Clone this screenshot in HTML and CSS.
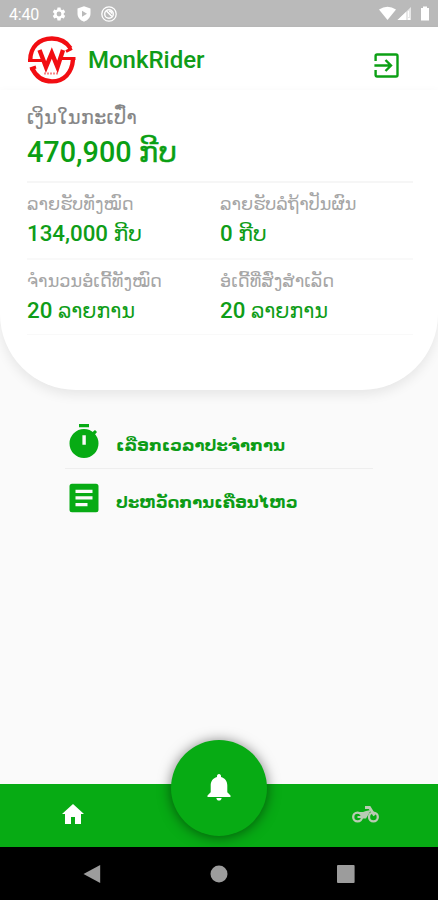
FILE: index.html
```html
<!DOCTYPE html>
<html lang="lo">
<head>
<meta charset="utf-8">
<title>MonkRider</title>
<link rel="stylesheet" href="styles.css">
</head>
<body>
<div class="screen">
  <div class="status">
    <span class="clock">4:40</span>
    <svg class="s-gear" width="16" height="16" viewBox="0 0 24 24"><path d="M19.14 12.94c.04-.3.06-.61.06-.94s-.02-.64-.07-.94l2.03-1.58a.49.49 0 0 0 .12-.61l-1.92-3.32a.49.49 0 0 0-.59-.22l-2.39.96a7 7 0 0 0-1.62-.94l-.36-2.54a.48.48 0 0 0-.48-.41h-3.84a.47.47 0 0 0-.47.41l-.36 2.54c-.59.24-1.13.57-1.62.94l-2.39-.96a.48.48 0 0 0-.59.22L2.74 8.87a.48.48 0 0 0 .12.61l2.03 1.58a6 6 0 0 0 0 1.88l-2.03 1.58a.49.49 0 0 0-.12.61l1.92 3.32c.12.22.37.29.59.22l2.39-.96c.5.38 1.03.7 1.62.94l.36 2.54c.05.24.24.41.48.41h3.84c.24 0 .44-.17.47-.41l.36-2.54a7 7 0 0 0 1.62-.94l2.39.96c.22.08.47 0 .59-.22l1.92-3.32a.47.47 0 0 0-.12-.61zM12 15.6a3.6 3.6 0 1 1 0-7.2 3.6 3.6 0 0 1 0 7.2z"/></svg>
    <svg class="s-shield" width="14" height="16" viewBox="0 0 14 16"><path fill-rule="evenodd" d="M7 .3 13.5 2.600v5c0 4-2.700 6.900-6.500 8.100C3.200 14.500.5 11.600.5 7.600v-5zM5 4.700v6L10 7.700z"/></svg>
    <svg class="s-ring" width="16" height="16" viewBox="0 0 16 16" fill="none" stroke="#fff"><circle cx="8" cy="8" r="7.200" stroke-width="1.300"/><circle cx="8" cy="8" r="4.300" stroke-width="1.400"/><path d="m5.500 5 5.500 5.500M8 5.200c2 0 2.800 1 2.800 2.500" stroke-width="1.500"/></svg>
    <span class="grow"></span>
    <svg width="51" height="16" viewBox="0 0 51 16"><path d="M0 3.500Q8.500-2 17 3.500L8.500 14z"/><path d="M32 1v13H18.500z" opacity=".65"/><path d="M27 6v8h-8.500zM29 5h1v6h-1zM29 12h2v2h-2z"/><path d="M42 2h2V.5h4V2h2v12.500h-8z"/></svg>
  </div>
  <header class="bar">
    <svg class="logo" width="48" height="48" viewBox="0 0 48 48" fill="none" stroke="#f20d12"><path d="M2.300 24.500C2 11 11 2.500 24 2.500c8 0 14.500 3.700 18.500 9.700" stroke-width="4.400"/><path d="M4 32C8 41 15 45.400 24 45.400c12 0 20-8.500 21-22" stroke-width="4.400"/><path d="M0 24.500h14M32 22.500h15.500M2 33l6-2M38 15.500l6-3" stroke-width="3"/><path d="m11.500 14 6.500 17 5.800-14L29.500 31 35 14" stroke-width="4.400"/><path d="M16 37.500h15" stroke-width="1.800" stroke-dasharray="2 1" opacity=".5"/></svg>
    <h1>MonkRider</h1>
    <svg class="exit" width="25" height="25" viewBox="0 0 25 25" fill="none" stroke="#0ca015" stroke-width="2.400"><path d="M1.600 8V3q0-1.500 1.500-1.500H22q1.500 0 1.500 1.500v19q0 1.500-1.500 1.500H3.100Q1.600 23.500 1.600 22v-5M.4 12.500H17M11.500 7l5.500 5.500-5.500 5.500"/></svg>
  </header>
  <section class="wallet">
    <div class="total">
      <div class="label strong">ເງິນໃນກະເປົ໋າ</div>
      <div class="amount">470,900 <span class="lao">ກີບ</span></div>
    </div>
    <div class="pair">
      <div><div class="label">ລາຍຮັບທັງໝົດ</div><div class="value">134,000 <span class="lao">ກີບ</span></div></div>
      <div><div class="label">ລາຍຮັບລໍຖ້າປັນຜົນ</div><div class="value">0 <span class="lao">ກີບ</span></div></div>
    </div>
    <div class="pair last">
      <div><div class="label">ຈຳນວນອໍເດີ້ທັງໝົດ</div><div class="value">20 <span class="lao items">ລາຍການ</span></div></div>
      <div><div class="label">ອໍເດີ້ທີ່ສົ່ງສຳເລັດ</div><div class="value">20 <span class="lao items">ລາຍການ</span></div></div>
    </div>
  </section>
  <nav class="menu">
    <a class="item">
      <svg width="30" height="35" viewBox="0 0 30 35"><path fill-rule="evenodd" d="M10 0h10v3.200H10zM15 5a14.500 14.500 0 1 1 0 29 14.500 14.500 0 0 1 0-29zm-1.600 6.200v9.600h3.400v-9.600z"/><path d="m23 8.500 3-2.500 2 2-2.500 3z"/></svg>
      <span>ເລືອກເວລາປະຈຳການ</span>
    </a>
    <a class="item second">
      <svg width="30" height="30" viewBox="0 0 30 30"><path fill-rule="evenodd" d="M3 .7h24q2.500 0 2.500 2.500v23.600q0 2.500-2.500 2.500H3Q.5 29.300.5 26.800V3.200Q.5.700 3 .7zM6.500 6.700V10h17V6.700zm0 6.600v3.300h17v-3.300zm0 6.700v3.300h12V20z"/></svg>
      <span>ປະຫວັດການເຄື່ອນໄຫວ</span>
    </a>
  </nav>
  <footer class="tabs">
    <div class="tab"><svg width="22" height="20" viewBox="0 0 22 20" fill="#fff"><path d="M11 0 22 10h-3v10h-6v-7H9v7H3V10H0z"/></svg></div>
    <div class="fab"><svg width="24" height="27" viewBox="0 0 24 27" fill="#fff"><path d="M12 0c1.300 0 2 1 2 2.200v.8c4 1 6.300 4.300 6.300 8.500v6.800L23.500 21.500V23H.5v-1.500l3.200-3.200v-6.800C3.700 7.300 6 4 10 3v-.8C10 1 10.700 0 12 0zM9.400 24h5.200c0 1.500-1 2.600-2.600 2.600S9.400 25.500 9.400 24z"/></svg></div>
    <div class="tab"><svg class="bike" width="27" height="17" viewBox="0 0 27 17" fill="none" stroke="#b9cbb4"><circle cx="5.600" cy="11" r="4.400" stroke-width="2.300"/><circle cx="21.400" cy="11" r="4.400" stroke-width="2.300"/><path d="M13 1.500h4.500l5 8" stroke-width="2.800"/><path d="M3 6h8l3-1 5-1-5 8.500h-4.500c0-3-2-5-6-6zM5.500 10H11v2H5.500z" fill="#b9cbb4" stroke="none"/></svg></div>
  </footer>
  <div class="system">
    <svg width="18" height="20" viewBox="0 0 18 20"><path d="M17.200 1v18L.5 10z"/></svg>
    <svg width="18" height="18" viewBox="0 0 18 18"><circle cx="9" cy="9" r="8.500"/></svg>
    <svg width="18" height="18" viewBox="0 0 18 18"><rect width="17.600" height="18" rx="1"/></svg>
  </div>
</div>
</body>
</html>
```
FILE: styles.css
```css
* { box-sizing: border-box; }
body { margin: 0; font-family: Roboto, "DejaVu Sans", sans-serif; }
.lao, .label, .item { font-family: "DejaVu Sans", sans-serif; }
.screen { width: 438px; height: 900px; display: flex; flex-direction: column; background: #fafafa; overflow: hidden; }
.status { height: 27px; flex: none; background: #bababa; display: flex; align-items: center; padding: 1px 8px 0 9px; fill: #fff; }
.clock { color: #fff; font-size: 16px; width: 42px; letter-spacing: -.2px; }
.s-shield { margin-left: 10px; }
.s-ring { margin-left: 10px; }
.grow { flex: 1; }
.bar { height: 63px; flex: none; background: #fff; display: flex; align-items: flex-start; padding: 9px 39px 0 28px; box-shadow: 0 0 3px rgba(0,0,0,.04); }
h1 { margin: 7px 0 0 12px; font-size: 24px; line-height: 34px; font-weight: 500; color: #109c18; flex: 1; }
.exit { margin-top: 17px; }
.wallet { height: 300px; flex: none; background: #fff; border-radius: 0 0 76px 76px; box-shadow: 0 5px 12px rgba(0,0,0,.08); padding: 0 25px 0 27px; }
.total { height: 93px; padding-top: 15px; border-bottom: 2px solid #f6f6f6; }
.pair { height: 77px; padding-top: 9px; display: grid; grid-template-columns: 193px 193px; border-bottom: 2px solid #f9f9f9; }
.pair.last { height: 75px; border-bottom-width: 1px; }
.label { height: 25px; line-height: 25px; font-size: 17.7px; color: #a6a6a6; white-space: nowrap; }
.label.strong { font-size: 19px; letter-spacing: .45px; color: #858585; -webkit-text-stroke: .2px #858585; }
.amount { font-size: 28.8px; line-height: 45px; font-weight: 500; color: #0a9f13; white-space: nowrap; }
.amount .lao { font-size: 29px; letter-spacing: .5px; line-height: 30px; -webkit-text-stroke: .5px #0a9f13; }
.value { font-size: 22.3px; line-height: 32px; font-weight: 500; color: #0f9d18; white-space: nowrap; }
.value .lao { font-weight: 400; font-size: 22px; line-height: 22px; }
.value .items { font-size: 20.6px; }
.menu { height: 395px; flex: none; margin: 0 65px -1px; padding-top: 28px; }
.item { height: 51px; display: flex; align-items: center; padding: 0 4px 4px; color: #0d9c16; fill: #07ab14; font-size: 16.4px; font-weight: 700; border-bottom: 1px solid #eee; white-space: nowrap; }
.item span { margin: 9px 0 0 17px; }
.item.second { height: 61px; border: 0; }
.tabs { position: relative; height: 63px; flex: none; background: #07ab14; display: grid; grid-template-columns: 146px 146px 146px; justify-items: center; align-items: center; }
.bike { margin-top: 2px; }
.fab { width: 96px; height: 96px; border-radius: 50%; background: #07ab14; margin-top: -56px; display: flex; align-items: center; justify-content: center; box-shadow: 0 1px 13px rgba(0,0,0,.5); }
.system { position: relative; height: 53px; flex: none; background: #000; fill: #9c9c9c; display: flex; align-items: center; justify-content: space-between; padding: 0 83px; }
```
